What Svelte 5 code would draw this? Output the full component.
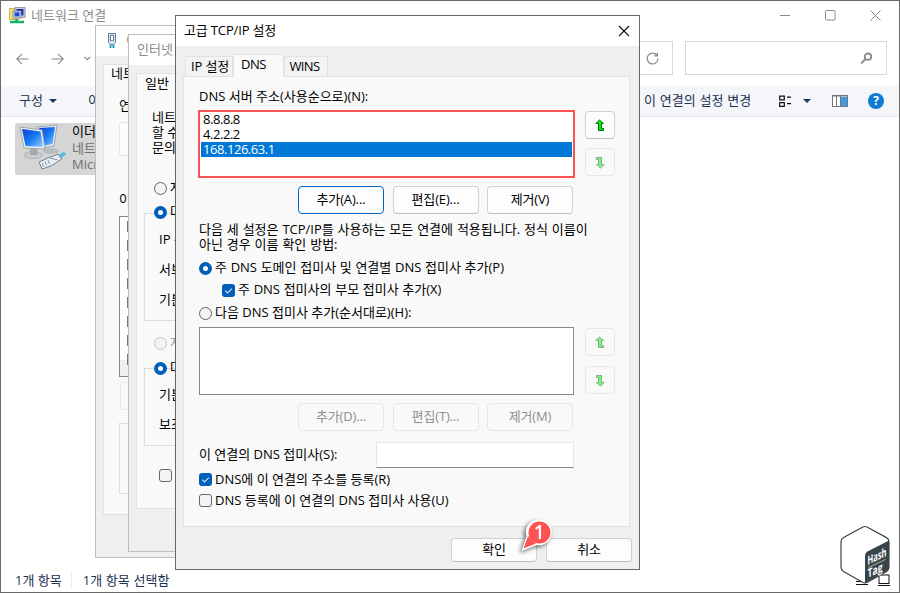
<script lang="ts">
  let servers = $state(["8.8.8.8", "4.2.2.2", "168.126.63.1"]);
  let selected = $state(2);
  let suffixMode = $state("primary");
  let parentSuffix = $state(true);
  let register = $state(true);
  let useSuffix = $state(false);
</script>

{#snippet arrow(down: boolean)}
  <svg class="arrow" class:down width="10" height="13" viewBox="0 0 10 13">
    <path d="M4.5 1 L.8 4.5 H3.5 V11.5 H8.5 V9.5 H6.5 V4.5 H8.5 Z" />
  </svg>
{/snippet}

{#snippet check()}
  <svg width="13" height="13" viewBox="0 0 13 13">
    <path d="M3.2 6.7 L5.5 9 L9.8 4.6" fill="none" stroke="#cfe4f7" stroke-width="1.1" />
  </svg>
{/snippet}

<div class="desktop">
  <section class="explorer">
    <header class="explorer-title">
      <svg width="17" height="17" viewBox="0 0 17 17">
        <rect x=".5" y="1.5" width="9" height="11" fill="#f5df7b" stroke="#d2b548" />
        <rect x="6" y=".7" width="10" height="9.5" fill="#e1e6ea" stroke="#7d8a96" />
        <rect x="7.5" y="2" width="7" height="6.5" fill="#1625b8" />
        <rect x="4" y="4" width="8" height="7" fill="#dfe4e8" stroke="#7d8a96" />
        <rect x="5.5" y="5.3" width="5" height="4.2" fill="#2447d8" />
        <path d="M7.5 12v3M1 15h14" stroke="#17b267" stroke-width="2.6" />
      </svg>
      <span class="explorer-name">네트워크 연결</span>
      <div class="caption-buttons">
        <svg width="11" height="11" viewBox="0 0 11 11"><path d="M0 5.5h10" /></svg>
        <svg width="11" height="11" viewBox="0 0 11 11"><rect x=".5" y=".5" width="9.5" height="9.5" rx="1" /></svg>
        <svg width="11" height="11" viewBox="0 0 11 11"><path d="M.5 .5l10 10M10.5 .5l-10 10" /></svg>
      </div>
    </header>

    <nav class="nav">
      <svg class="back" width="13" height="12" viewBox="0 0 13 12"><path d="M12.5 6H1M6 .8L.8 6L6 11.2" /></svg>
      <svg class="forward" width="13" height="12" viewBox="0 0 13 12"><path d="M.5 6H12M7 .8L12.2 6L7 11.2" /></svg>
      <svg class="recent" width="7" height="5" viewBox="0 0 7 5"><path d="M.5 .8L3.3 3.7L6.1 .8" /></svg>
      <div class="address">
        <svg width="13" height="13" viewBox="0 0 13 13">
          <path d="M11.2 3.7A5.4 5.4 0 1 0 12 6.5M11.4 .8V3.9H8.2" />
        </svg>
      </div>
      <div class="search">
        <svg width="13" height="13" viewBox="0 0 13 13">
          <circle cx="8" cy="4.7" r="3.2" stroke-width="1.8" />
          <path d="M5.6 7L1.2 11.4" stroke-width="2" />
        </svg>
      </div>
    </nav>

    <div class="commands">
      <span class="organize">구성</span>
      <svg width="8" height="4" viewBox="0 0 8 4"><path d="M0 0h8L4 4z" fill="#1b3a63" /></svg>
      <span class="disable">이</span>
      <span class="change">이 연결의 설정 변경</span>
      <svg class="views" width="14" height="13" viewBox="0 0 14 13">
        <path d="M.7 1.2h4.6v3.6H.7zM.7 7.7h4.6v3.6H.7zM8 2.2h4M8 8.7h4" fill="none" stroke="#111" stroke-width="1.2" />
      </svg>
      <svg class="views-caret" width="8" height="4" viewBox="0 0 8 4"><path d="M0 0h8L4 4z" fill="#1b3a63" /></svg>
      <svg class="pane" width="16" height="12" viewBox="0 0 16 12">
        <rect x=".5" y=".5" width="15" height="11" fill="#fff" stroke="#777" />
        <path d="M0 1h16M4.5 1v11M8.5 1v11" stroke="#777" />
        <rect x="9" y="2" width="6" height="9" fill="#3f98e8" />
      </svg>
      <span class="help">?</span>
    </div>

    <main class="items">
      <div class="adapter">
        <svg width="52" height="50" viewBox="0 0 52 50">
          <defs>
            <linearGradient id="screen" x1="0" y1="0" x2="1" y2="1">
              <stop offset="0" stop-color="#0a3fd0" />
              <stop offset=".5" stop-color="#1679f2" />
              <stop offset="1" stop-color="#8fd0ff" />
            </linearGradient>
          </defs>
          <ellipse cx="36" cy="28" rx="8" ry="3" fill="#b9bcbf" />
          <path d="M22 4L42 2L39 23L26 25Z" fill="#e7eaec" stroke="#a0a6ab" />
          <path d="M24 5L40 4L37.5 21L27 23Z" fill="url(#screen)" />
          <ellipse cx="18" cy="32" rx="9" ry="3.5" fill="#c9cccf" stroke="#adb0b2" />
          <path d="M15 26h7l1 6h-8z" fill="#a5a9ac" />
          <path d="M5 4L27 7L30 26L9 25Z" fill="#eef0f1" stroke="#a0a6ab" />
          <path d="M7 6L25.5 8.5L28 24L10.5 23Z" fill="url(#screen)" />
          <path d="M43 35L50 30" stroke="#52bfe0" stroke-width="3.5" />
          <path d="M24 39L33 35L43 31L47 36L36 43L27 46Z" fill="#e6ecf1" stroke="#6d8298" />
          <path d="M27 40l1.5 4M30 38.5l1.5 4M33 37l1.5 4M35 35l8 2" stroke="#8699ab" fill="none" />
        </svg>
        <div class="adapter-text">
          <span class="adapter-name">이더</span>
          <span>네트</span>
          <span>Micr</span>
        </div>
      </div>
    </main>

    <footer class="status">
      <span class="count">1개 항목</span>
      <span class="picked">1개 항목 선택함</span>
      <svg class="layouts" width="35" height="12" viewBox="0 0 35 12">
        <path d="M0 7.5h12M0 10.5h12M22 11.5h12" stroke="#111" />
        <rect x="23" y="1" width="10" height="8.5" fill="#fff" stroke="#111" />
      </svg>
    </footer>
  </section>

  <section class="window ethernet">
    <header class="window-title">
      <svg width="12" height="18" viewBox="0 0 12 18">
        <path d="M2.5 1.5h7v9l-2 2h-3l-2-2z" fill="#dce7f2" stroke="#647e98" />
        <path d="M4.5 3.5v5h3v-5z" fill="#fff" stroke="#647e98" />
        <path d="M4.5 13v3M7.5 13v3" stroke="#1ba0c8" stroke-width="2" />
      </svg>
      <span>이</span>
    </header>
    <div class="sheet">
      <span class="sheet-tab">네트</span>
      <span class="connect-label">연</span>
      <div class="connect-box"></div>
      <span class="uses-label">이</span>
      <div class="protocols">
        {#each Array(8) as _}
          <i></i>
        {/each}
      </div>
      <div class="install"></div>
      <div class="description"></div>
    </div>
  </section>

  <section class="window protocol">
    <header class="window-title"><span>인터넷</span></header>
    <div class="sheet">
      <span class="sheet-tab">일반</span>
      <p class="intro">네트<br />할 수<br />문의</p>
      <div class="option"><i class="radio off"></i><span>자</span></div>
      <div class="fields upper">
        <div class="option"><i class="radio on"></i><span>다</span></div>
        <span>IP 주</span>
        <span>서브</span>
        <span>기본</span>
      </div>
      <div class="option dim"><i class="radio off"></i><span>자</span></div>
      <div class="fields lower">
        <div class="option"><i class="radio on"></i><span>다</span></div>
        <span>기본</span>
        <span>보조</span>
      </div>
      <div class="validate"><i class="box"></i></div>
    </div>
  </section>

  <section class="dialog">
    <header class="dialog-title">
      <span>고급 TCP/IP 설정</span>
      <svg width="12" height="12" viewBox="0 0 12 12"><path d="M1 1l10 10M11 1L1 11" stroke="#111" stroke-width="1.1" /></svg>
    </header>

    <div class="tabs">
      <span class="tab ip">IP 설정</span>
      <span class="tab active">DNS</span>
      <span class="tab wins">WINS</span>
    </div>

    <div class="panel">
      <div class="list-label">DNS 서버 주소(사용순으로)(N):</div>
      <div class="list-row">
        <div class="servers">
          {#each servers as server, i}
            <div class="server" class:selected={i === selected}>{server}</div>
          {/each}
        </div>
        <div class="movers">
          <button class="mover">{@render arrow(false)}</button>
          <button class="mover" disabled>{@render arrow(true)}</button>
        </div>
      </div>
      <div class="actions">
        <button class="primary">추가(A)...</button>
        <button>편집(E)...</button>
        <button>제거(V)</button>
      </div>

      <p class="note">
        <span>다음 세 설정은 TCP/IP를 사용하는 모든 연결에 적용됩니다. 정식 이름이</span>
        <span>아닌 경우 이름 확인 방법:</span>
      </p>

      <div class="choice append">
        <i class="radio" class:on={suffixMode === "primary"}></i>
        <span>주 DNS 도메인 접미사 및 연결별 DNS 접미사 추가(P)</span>
      </div>
      <div class="choice parent">
        <i class="box" class:checked={parentSuffix}>{#if parentSuffix}{@render check()}{/if}</i>
        <span>주 DNS 접미사의 부모 접미사 추가(X)</span>
      </div>
      <div class="choice ordered">
        <i class="radio" class:on={suffixMode === "list"}></i>
        <span>다음 DNS 접미사 추가(순서대로)(H):</span>
      </div>

      <div class="list-row suffix-row">
        <div class="suffixes"></div>
        <div class="movers">
          <button class="mover" disabled>{@render arrow(false)}</button>
          <button class="mover" disabled>{@render arrow(true)}</button>
        </div>
      </div>
      <div class="actions">
        <button disabled>추가(D)...</button>
        <button disabled>편집(T)...</button>
        <button disabled>제거(M)</button>
      </div>

      <div class="suffix-field">
        <span>이 연결의 DNS 접미사(S):</span>
        <input type="text" />
      </div>
      <div class="choice register">
        <i class="box" class:checked={register}>{#if register}{@render check()}{/if}</i>
        <span>DNS에 이 연결의 주소를 등록(R)</span>
      </div>
      <div class="choice use">
        <i class="box" class:checked={useSuffix}>{#if useSuffix}{@render check()}{/if}</i>
        <span>DNS 등록에 이 연결의 DNS 접미사 사용(U)</span>
      </div>
    </div>

    <footer class="confirm">
      <button>확인</button>
      <button>취소</button>
    </footer>
  </section>

  <svg class="marker" width="40" height="42" viewBox="0 0 40 42">
    <path d="M5.5 35L10.5 20A13 13 0 1 1 21 29Z" fill="#fff" />
    <path d="M7.5 32.5L12 20L20 27.5Z" fill="#ff5353" />
    <circle cx="23.5" cy="16.5" r="11" fill="#ff5353" />
    <text x="23.3" y="23" text-anchor="middle">1</text>
  </svg>

  <svg class="logo" width="52" height="60" viewBox="0 0 52 60">
    <path
      d="M23.5 2.2Q26 .8 28.5 2.2L47.5 12.6Q50 14 50 17V42Q50 45 47.5 46.5L28.5 57.2Q26 58.6 23.5 57.2L4.5 46.5Q2 45 2 42V17Q2 14 4.5 12.6Z"
      fill="#fff"
      stroke="#374549"
      stroke-width="1.2"
    />
    <path d="M26 31Q26 28 28.5 26.6L50 15.5V42Q50 45 47.5 46.5L26 58Z" fill="#374549" />
    <g transform="matrix(1 -.48 0 1 28.5 41)">
      <text class="hash" x="0" y="-1" textLength="19" lengthAdjust="spacingAndGlyphs">Hash</text>
      <path d="M1 2H18" stroke="#b9c0c2" stroke-width=".8" />
      <text class="hash" x="0" y="12" textLength="15" lengthAdjust="spacingAndGlyphs">Tag</text>
    </g>
  </svg>
</div>

<style>
  :global(body) {
    margin: 0;
    overflow: hidden;
  }

  .desktop {
    position: relative;
    width: 900px;
    height: 593px;
    overflow: hidden;
    font: 13px/16px "Open Sans", "Noto Sans CJK KR", sans-serif;
    color: #000;
    white-space: nowrap;
  }

  .desktop * {
    box-sizing: border-box;
  }

  svg {
    display: block;
    flex: none;
  }

  i {
    display: block;
    flex: none;
  }

  /* explorer window */
  .explorer {
    display: flex;
    flex-direction: column;
    height: 593px;
    border: 1px solid #686868;
    background: #fff;
  }

  .explorer-title {
    display: flex;
    align-items: center;
    height: 29px;
    padding: 0 18px 0 8px;
    color: #8c8c8c;
  }

  .explorer-name {
    margin-left: 5px;
    padding-bottom: 2px;
  }

  .caption-buttons {
    display: flex;
    gap: 34px;
    margin-left: auto;
    fill: none;
    stroke: #8a8a8a;
  }

  .nav {
    display: flex;
    align-items: center;
    height: 56px;
    padding: 0 12px 0 15px;
    fill: none;
    stroke: #8a8a8a;
    stroke-width: 1.2;
  }

  .back,
  .forward {
    margin-top: 1px;
  }

  .forward {
    margin-left: 22px;
  }

  .recent {
    margin-left: 20px;
  }

  .address,
  .search {
    display: flex;
    align-items: center;
    justify-content: flex-end;
    height: 34px;
    border: 1px solid #d9d9d9;
  }

  .address {
    flex: 1;
    margin-left: 15px;
    padding-right: 13px;
  }

  .search {
    width: 202px;
    margin-left: 12px;
    padding-right: 13px;
  }

  .commands {
    display: flex;
    align-items: center;
    height: 31px;
    padding: 0 15px 0 18px;
    border-bottom: 1px solid #e4e7eb;
    background: #f4f6f9;
    color: #1b3252;
  }

  .organize,
  .disable,
  .change {
    padding-bottom: 2px;
  }

  .organize {
    margin-right: 6px;
  }

  .disable {
    width: 12px;
    margin-left: 31px;
  }

  .change {
    width: 108px;
    margin-left: 544px;
    word-spacing: 0.5px;
  }

  .views {
    margin-left: auto;
  }

  .views-caret {
    margin-left: 10px;
  }

  .pane {
    margin-left: 21px;
  }

  .help {
    width: 16px;
    height: 16px;
    margin-left: 20px;
    border-radius: 50%;
    background: #0f7bd2;
    color: #fff;
    font-size: 12px;
    font-weight: 700;
    text-align: center;
  }

  .items {
    flex: 1;
    padding: 6px 14px;
  }

  .adapter {
    display: flex;
    width: 200px;
    height: 52px;
    border-radius: 2px;
    background: #d5d5d5;
    color: #6f6f6f;
  }

  .adapter-text {
    display: flex;
    flex-direction: column;
    padding: 0 0 0 5px;
    line-height: 16.5px;
  }

  .adapter-name {
    color: #000;
  }

  .status {
    display: flex;
    align-items: center;
    height: 25px;
    padding: 0 8px 0 14px;
    color: #1b3252;
  }

  .picked {
    margin-left: 9px;
    padding-left: 11px;
    border-left: 1px solid #eee;
    word-spacing: 0.4px;
  }

  .layouts {
    margin-left: auto;
  }

  /* property sheets stacked behind the dialog */
  .window {
    position: absolute;
    overflow: hidden;
    border: 1px solid #bdbdbd;
    background: #efefef;
  }

  .ethernet {
    left: 95px;
    top: 25px;
    width: 400px;
    height: 533px;
  }

  .protocol {
    left: 128px;
    top: 34px;
    width: 400px;
    height: 518px;
  }

  .window-title {
    display: flex;
    align-items: center;
    height: 30px;
    padding-left: 8px;
    background: #fff;
    color: #8c8c8c;
  }

  .window-title span {
    padding-bottom: 2px;
  }

  .ethernet .window-title {
    gap: 8px;
    padding-left: 10px;
  }

  .sheet {
    display: flex;
    flex-direction: column;
    margin: 8px 7px 0;
    border: 1px solid #e2e2e2;
    background: #f9f9f9;
  }

  .ethernet .sheet {
    height: 451px;
    padding-left: 15px;
  }

  .protocol .sheet {
    height: 436px;
    padding-left: 7px;
  }

  .ethernet .sheet-tab {
    margin: 0 0 1px -8px;
  }

  .connect-label {
    margin-top: 15px;
  }

  .connect-box {
    height: 34px;
    margin-top: 9px;
    border: 1px solid #e6e6e6;
    border-radius: 3px;
    background: #fcfcfc;
  }

  .uses-label {
    margin-top: 35px;
  }

  .protocols {
    display: flex;
    flex-direction: column;
    gap: 8px;
    height: 161px;
    margin-top: 9px;
    padding: 4px 0 0 7px;
    border: 1px solid #828790;
    background: linear-gradient(#fff 143px, #efefef 143px);
    overflow: hidden;
  }

  .protocols i {
    flex: none;
    width: 11px;
    height: 11px;
    border: 1px solid #777;
  }

  .install {
    height: 28px;
    margin: 5px 0 0 1px;
    border: 1px solid #e6e6e6;
    border-radius: 4px;
  }

  .description {
    height: 71px;
    margin-top: 13px;
    border: 1px solid #dcdcdc;
  }

  .protocol .sheet-tab {
    margin: 1px 0 0 1px;
  }

  .intro {
    margin: 19px 0 0 8px;
    line-height: 15px;
  }

  .option {
    display: flex;
    align-items: center;
    gap: 3px;
    height: 24px;
    margin-left: 10px;
  }

  .option span {
    padding-bottom: 3px;
  }

  .intro + .option {
    margin-top: 21px;
  }

  .fields {
    display: flex;
    flex-direction: column;
    position: relative;
    padding-left: 14px;
    border: 1px solid #dcdcdc;
  }

  .fields .option {
    position: absolute;
    left: -1px;
    top: -14px;
  }

  .upper {
    height: 108px;
    margin-top: 13px;
    padding-top: 17px;
    gap: 14px;
  }

  .upper + .option {
    margin-top: 10px;
  }

  .lower {
    height: 78px;
    margin-top: 13px;
    padding-top: 17px;
    gap: 14px;
  }

  .lower .option {
    top: -13px;
  }

  .dim {
    color: #8c8c8c;
    opacity: 0.8;
  }

  .validate {
    margin: 23px 0 0 15px;
  }

  .radio {
    width: 13px;
    height: 13px;
    border: 1px solid #666;
    border-radius: 50%;
    background: #f4f4f4;
  }

  .radio.on {
    border: 4px solid #005fb8;
    background: #fff;
  }

  .dim .radio {
    border-color: #b5b5b5;
  }

  .box {
    width: 13px;
    height: 13px;
    border: 1px solid #666;
    border-radius: 3px;
    background: #f4f4f4;
  }

  .box.checked {
    border: 0;
    background: #005fb8;
  }

  /* advanced settings dialog */
  .dialog {
    position: absolute;
    left: 175px;
    top: 15px;
    display: flex;
    flex-direction: column;
    width: 465px;
    height: 555px;
    border: 1px solid #666;
    background: #efefef;
  }

  .dialog-title {
    display: flex;
    align-items: center;
    justify-content: space-between;
    height: 30px;
    padding: 0 9px 0 8px;
    background: #fff;
    letter-spacing: -0.15px;
  }

  .dialog-title span {
    padding-bottom: 2px;
  }

  .tabs {
    display: flex;
    align-items: flex-end;
    height: 22px;
    margin: 8px 0 0 9px;
  }

  .tab {
    height: 20px;
    border: 1px solid #e2e2e2;
    border-bottom: 0;
    background: #f3f3f3;
    line-height: 19px;
    text-align: center;
  }

  .tab.ip {
    width: 48px;
    padding-left: 2px;
    letter-spacing: -0.1px;
  }

  .tab.wins {
    width: 44px;
    padding-right: 3px;
    letter-spacing: -0.6px;
  }

  .tab.active {
    position: relative;
    width: 51px;
    height: 23px;
    margin-bottom: -1px;
    padding-right: 10px;
    background: #f9f9f9;
    letter-spacing: -0.4px;
  }

  .panel {
    display: flex;
    flex-direction: column;
    width: 447px;
    height: 451px;
    margin-left: 7px;
    padding: 10px 14px 0 15px;
    border: 1px solid #e2e2e2;
    background: #f9f9f9;
  }

  .list-label {
    height: 23px;
    line-height: 18px;
  }

  .list-row {
    display: flex;
    gap: 10px;
    margin-left: -1px;
  }

  .servers {
    width: 377px;
    height: 68px;
    padding: 0 1px;
    border: 2px solid #f95252;
    background: #fff;
    letter-spacing: -0.45px;
  }

  .server {
    height: 15px;
    padding-left: 2px;
    line-height: 15px;
  }

  .server.selected {
    background: #0078d7;
    color: #fff;
  }

  .movers {
    display: flex;
    flex-direction: column;
    gap: 9px;
    padding-top: 1px;
  }

  button {
    display: flex;
    align-items: center;
    justify-content: center;
    width: 86px;
    height: 28px;
    padding: 0 0 3px;
    border: 1px solid #d0d0d0;
    border-bottom-color: #bcbcbc;
    border-radius: 4px;
    background: #fdfdfd;
    color: #000;
    font: inherit;
    letter-spacing: -0.15px;
  }

  button:disabled {
    border-color: #e6e6e6;
    background: #f9f9f9;
    color: #8f8f8f;
  }

  .primary {
    border-color: #0067c0;
  }

  .mover {
    width: 30px;
    padding: 0;
  }

  .arrow {
    fill: #00f000;
    stroke: #006b12;
  }

  .arrow.down {
    transform: rotate(180deg);
  }

  .mover:disabled .arrow {
    opacity: 0.5;
  }

  .actions {
    display: flex;
    gap: 8.5px;
    margin: 8px 0 0 99px;
  }

  .note {
    display: flex;
    flex-direction: column;
    margin: 8px 0 5px;
    line-height: 15px;
    word-spacing: 0.5px;
  }

  .choice {
    display: flex;
    align-items: center;
    gap: 3px;
    height: 22px;
  }

  .choice span {
    padding-bottom: 2px;
  }

  .append {
    word-spacing: 0.3px;
  }

  .parent {
    margin-left: 23px;
    word-spacing: 0.3px;
  }

  .ordered {
    margin: 1px 0 3px;
  }

  .suffix-row {
    gap: 11px;
    margin-left: 0;
  }

  .suffix-row .movers {
    gap: 10px;
  }

  .suffixes {
    width: 375px;
    height: 68px;
    border: 1px solid #828790;
    background: #fff;
  }

  .suffix-field {
    display: flex;
    align-items: center;
    justify-content: space-between;
    height: 26px;
    margin: 11px 41px 0 0;
  }

  .suffix-field span {
    padding-bottom: 2px;
  }

  input {
    width: 198px;
    height: 26px;
    padding: 0 4px;
    border: 1px solid #e6e6e6;
    border-bottom-color: #868686;
    border-radius: 0;
    background: #fff;
    font: inherit;
  }

  .register,
  .use {
    height: 21px;
  }

  .register {
    margin-top: 1px;
  }

  .confirm {
    display: flex;
    justify-content: flex-end;
    gap: 9px;
    padding: 11px 7px 0 0;
  }

  .confirm button {
    height: 24px;
  }

  /* step marker and watermark drawn over the windows */
  .marker {
    position: absolute;
    left: 516px;
    top: 516px;
    filter: drop-shadow(-2px 2px 2px rgba(0, 0, 0, 0.55));
  }

  .marker text {
    fill: #fff;
    font-size: 19px;
    font-weight: 600;
  }

  .logo {
    position: absolute;
    left: 839px;
    top: 525px;
    overflow: visible;
  }

  .hash {
    fill: #fff;
    font-size: 12px;
    font-weight: 700;
  }
</style>
